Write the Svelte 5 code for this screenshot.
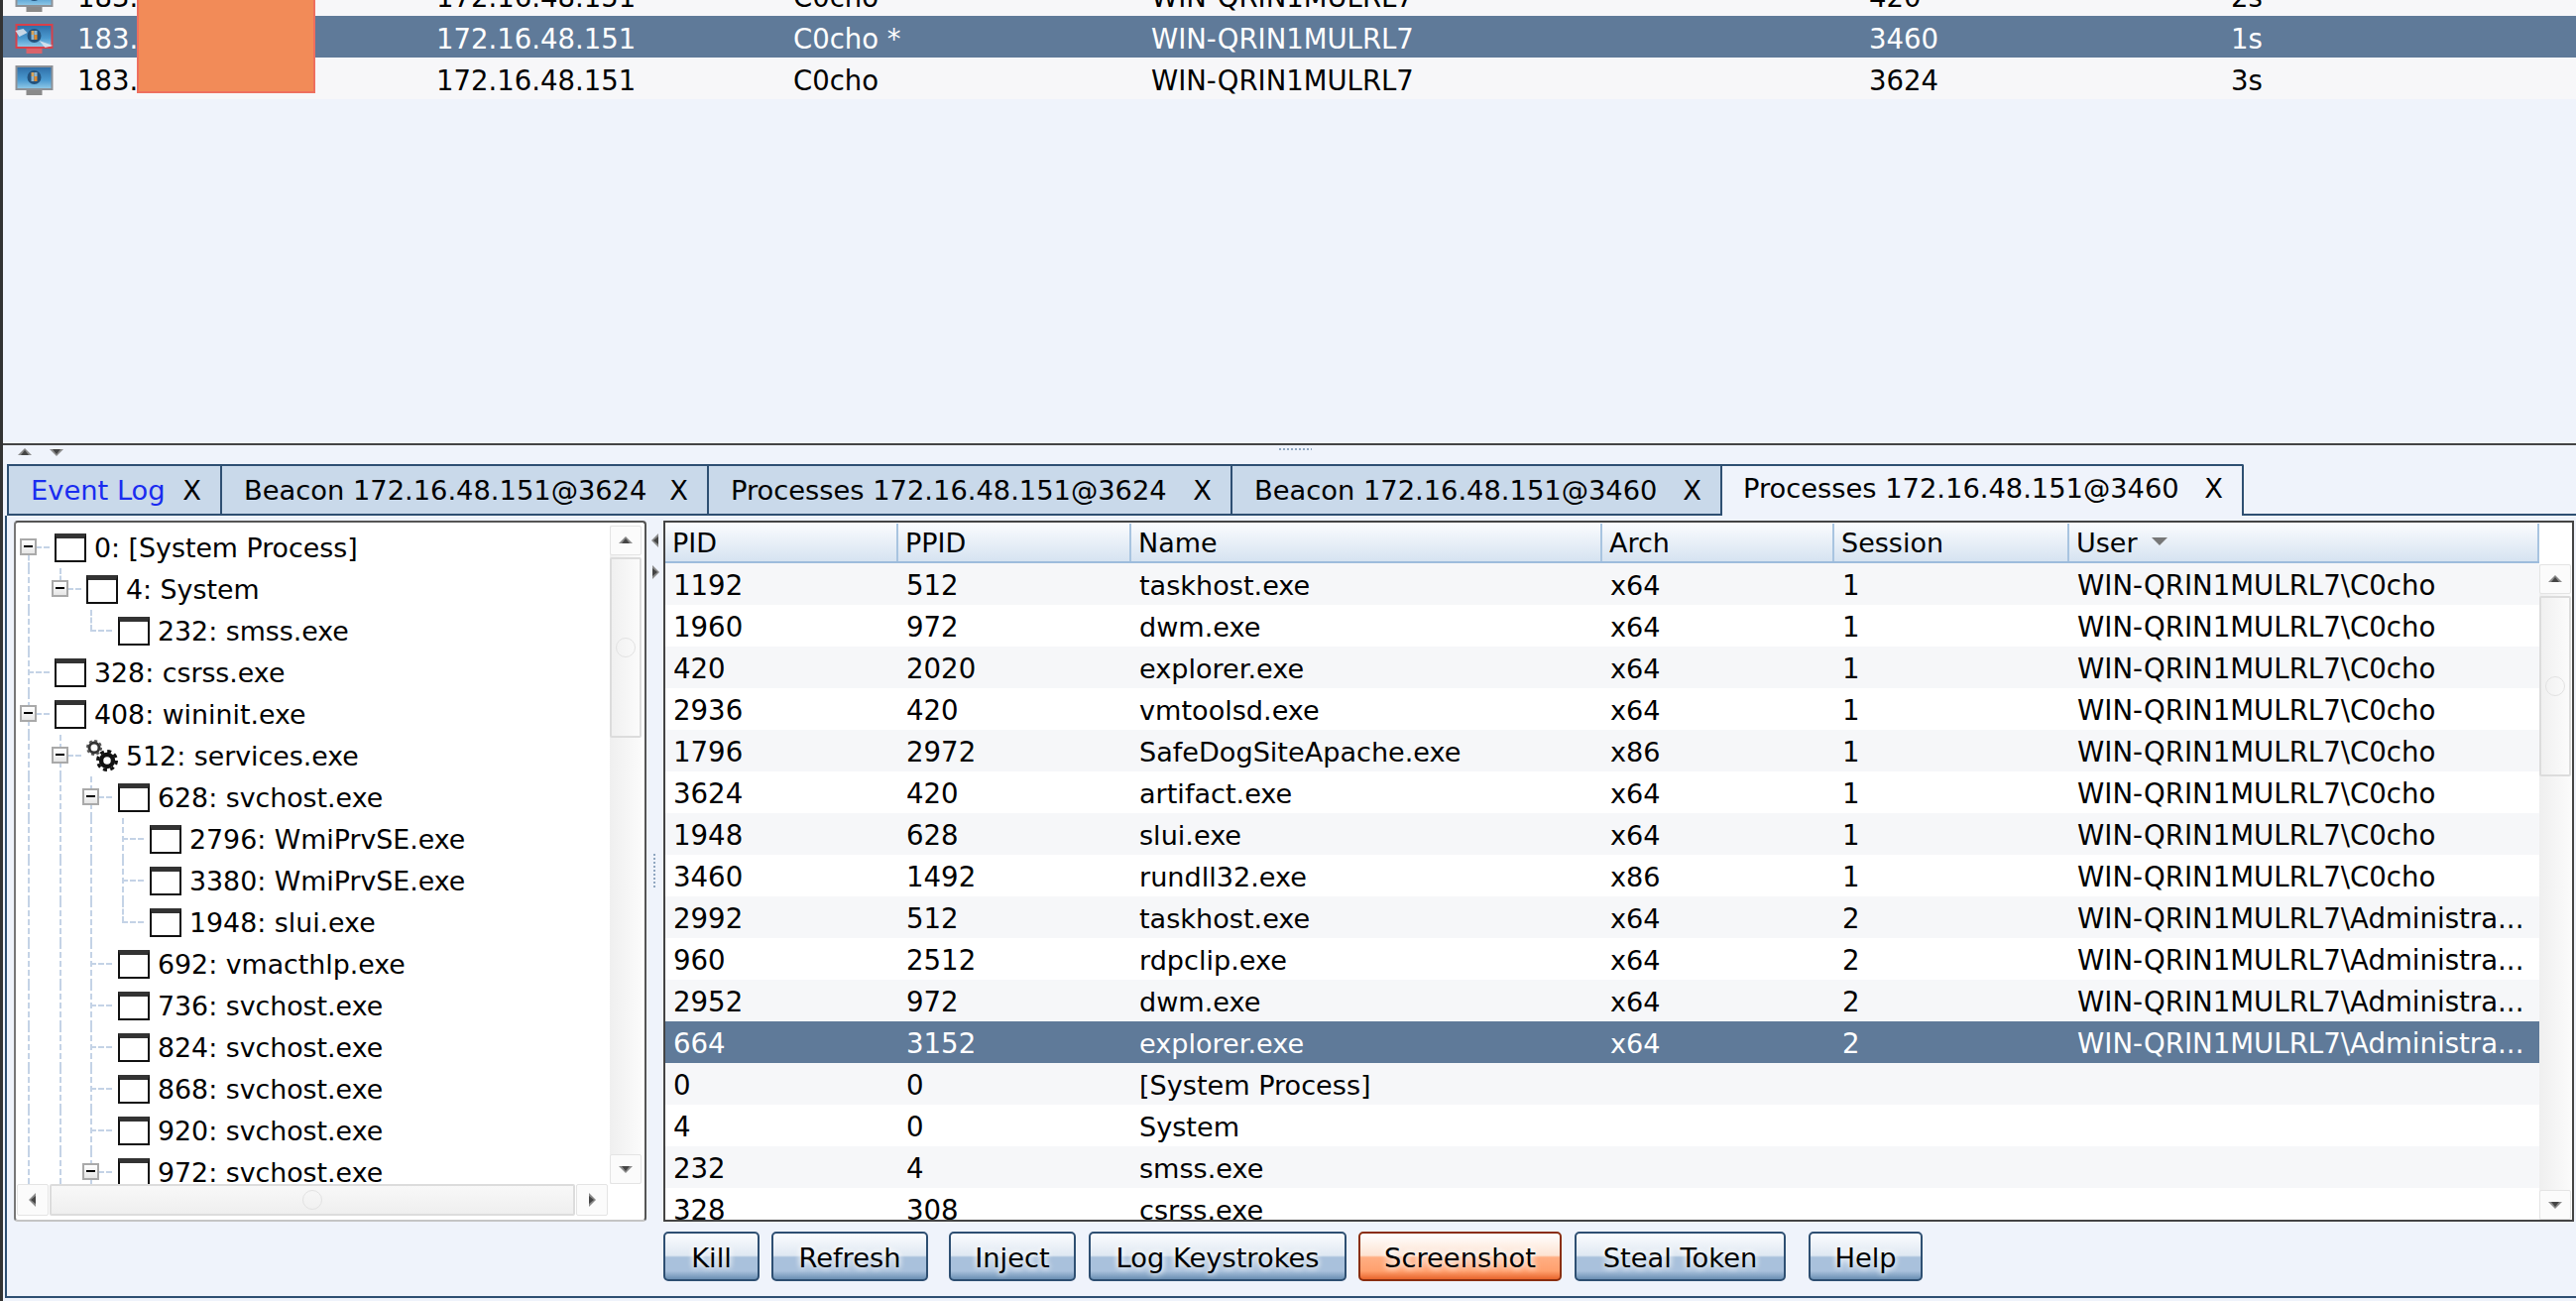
<script lang="ts">
    const host = "WIN-QRIN1MULRL7";

    const sessions = [
        { ext: "183.", note: "C0cho", pid: "420", last: "2s", selected: false },
        { ext: "183.", note: "C0cho *", pid: "3460", last: "1s", selected: true },
        { ext: "183.", note: "C0cho", pid: "3624", last: "3s", selected: false },
    ];

    const tabs = [
        { label: "Event Log", kind: "log" },
        { label: "Beacon 172.16.48.151@3624", kind: "" },
        { label: "Processes 172.16.48.151@3624", kind: "" },
        { label: "Beacon 172.16.48.151@3460", kind: "" },
        { label: "Processes 172.16.48.151@3460", kind: "active" },
    ];

    // depth, label, has expander, uses gear icon
    const treeSource: [number, string, boolean, boolean?][] = [
        [0, "0: [System Process]", true],
        [1, "4: System", true],
        [2, "232: smss.exe", false],
        [0, "328: csrss.exe", false],
        [0, "408: wininit.exe", true],
        [1, "512: services.exe", true, true],
        [2, "628: svchost.exe", true],
        [3, "2796: WmiPrvSE.exe", false],
        [3, "3380: WmiPrvSE.exe", false],
        [3, "1948: slui.exe", false],
        [2, "692: vmacthlp.exe", false],
        [2, "736: svchost.exe", false],
        [2, "824: svchost.exe", false],
        [2, "868: svchost.exe", false],
        [2, "920: svchost.exe", false],
        [2, "972: svchost.exe", true],
    ];

    function hasNextSibling(i: number): boolean {
        const depth = treeSource[i][0];
        for (let j = i + 1; j < treeSource.length; j++) {
            if (treeSource[j][0] === depth) return true;
            if (treeSource[j][0] < depth) return false;
        }
        return true;
    }

    const colX = (d: number) => 12 + 31.5 * d;

    // Work out the dashed connector lines of each row
    const open: boolean[] = [];
    const treeRows = treeSource.map(([depth, label, expander, gear], i) => {
        const next = hasNextSibling(i);
        const full: number[] = [];
        for (let k = 0; k < depth; k++) {
            if (open[k]) full.push(colX(k));
        }
        open[depth] = next;
        return { depth, label, expander, gear, next, full, first: i === 0 };
    });

    const processes = [
        ["1192", "512", "taskhost.exe", "x64", "1", "C0cho"],
        ["1960", "972", "dwm.exe", "x64", "1", "C0cho"],
        ["420", "2020", "explorer.exe", "x64", "1", "C0cho"],
        ["2936", "420", "vmtoolsd.exe", "x64", "1", "C0cho"],
        ["1796", "2972", "SafeDogSiteApache.exe", "x86", "1", "C0cho"],
        ["3624", "420", "artifact.exe", "x64", "1", "C0cho"],
        ["1948", "628", "slui.exe", "x64", "1", "C0cho"],
        ["3460", "1492", "rundll32.exe", "x86", "1", "C0cho"],
        ["2992", "512", "taskhost.exe", "x64", "2", "Administra..."],
        ["960", "2512", "rdpclip.exe", "x64", "2", "Administra..."],
        ["2952", "972", "dwm.exe", "x64", "2", "Administra..."],
        ["664", "3152", "explorer.exe", "x64", "2", "Administra..."],
        ["0", "0", "[System Process]", "", "", ""],
        ["4", "0", "System", "", "", ""],
        ["232", "4", "smss.exe", "", "", ""],
        ["328", "308", "csrss.exe", "", "", ""],
    ];
    const selectedProcess = 11;

    const columns = ["PID", "PPID", "Name", "Arch", "Session", "User"];

    const buttons = [
        { label: "Kill", cls: "kill" },
        { label: "Refresh", cls: "refresh" },
        { label: "Inject", cls: "inject" },
        { label: "Log Keystrokes", cls: "keys" },
        { label: "Screenshot", cls: "shot" },
        { label: "Steal Token", cls: "steal" },
        { label: "Help", cls: "help" },
    ];
</script>

{#snippet arrow(dir: string)}
    <svg class="arrow {dir}" viewBox="0 0 16 10" width="16" height="10">
        <polygon points="8,1 15,8 1,8" fill="#8a8a8a" />
        <polygon points="8,3 12,8 4,8" fill="#444" />
    </svg>
{/snippet}

{#snippet monitor(selected: boolean)}
    <svg class="monitor" viewBox="0 0 38 30" width="39" height="30">
        <defs>
            <linearGradient id="scr{selected ? 1 : 0}" x1="0" y1="0" x2="0" y2="1">
                <stop offset="0" stop-color="#2f6fa8" />
                <stop offset="0.6" stop-color="#4b9ad0" />
                <stop offset="1" stop-color="#8cc6e6" />
            </linearGradient>
        </defs>
        <rect x="11" y="24" width="16" height="6" fill={selected ? "#d9636b" : "#8a8a8a"} />
        <rect x="0" y="0" width="38" height="25" fill={selected ? "#d8404a" : "#8d9197"} />
        <rect x="2" y="2" width="34" height="21" fill="url(#scr{selected ? 1 : 0})" />
        <circle cx="19" cy="12" r="7" fill="#24527c" />
        <rect x="16" y="7" width="3" height="4" fill="#d9a55a" />
        <rect x="19" y="7" width="3" height="4" fill="#8fb6cf" />
        <rect x="16" y="11" width="3" height="5" fill="#8fb6cf" />
        <rect x="19" y="11" width="3" height="5" fill="#e08a2c" />
        {#if selected}
            <path d="M0 7 L8 5 L12 9 L4 13 Z M24 17 L38 22 L30 24 Z" fill="#dfe6ee" opacity="0.85" />
        {/if}
    </svg>
{/snippet}

{#snippet gearIcon()}
    <svg class="gear" viewBox="0 0 32 32" width="32" height="32">
        <circle cx="8" cy="8" r="5" fill="none" stroke="#333" stroke-width="3" />
        <circle cx="8" cy="8" r="7" fill="none" stroke="#555" stroke-width="2" stroke-dasharray="3 2.5" />
        <circle cx="21" cy="21" r="6" fill="none" stroke="#111" stroke-width="4.5" />
        <circle cx="21" cy="21" r="9.5" fill="none" stroke="#111" stroke-width="3" stroke-dasharray="4 3.45" />
    </svg>
{/snippet}

<div class="app">
    <section class="sessions">
        {#each sessions as s}
            <div class="session-row" class:selected={s.selected}>
                <span class="session-icon">{@render monitor(s.selected)}</span>
                <span>{s.ext}</span>
                <span>172.16.48.151</span>
                <span>{s.note}</span>
                <span>{host}</span>
                <span>{s.pid}</span>
                <span>{s.last}</span>
            </div>
        {/each}
        <div class="redaction"></div>
    </section>

    <div class="splitter">
        <div class="split-arrows">
            {@render arrow("up")}
            {@render arrow("down")}
        </div>
        <div class="grip"></div>
    </div>

    <nav class="tabs">
        {#each tabs as tab}
            <div class="tab {tab.kind}">
                <span class="tab-label">{tab.label}</span>
                <span class="tab-close">X</span>
            </div>
        {/each}
        <div class="tab-rest"></div>
    </nav>

    <div class="pane">
        <div class="split">
            <div class="tree-panel">
                <div class="tree-top">
                    <div class="tree">
                        {#each treeRows as row}
                            <div class="tree-row" style="padding-left: {39 + 32 * row.depth}px">
                                {#each row.full as x}
                                    <i class="line full" style="left: {x}px"></i>
                                {/each}
                                {#if row.first}
                                    <i class="line lower" style="left: {colX(0)}px"></i>
                                {:else}
                                    <i class="line {row.next ? 'full' : 'upper'}" style="left: {colX(row.depth)}px"></i>
                                {/if}
                                <i class="stub" style="left: {colX(row.depth)}px"></i>
                                {#if row.expander}
                                    <i class="expander" style="left: {colX(row.depth) - 8}px"></i>
                                {/if}
                                {#if row.gear}
                                    {@render gearIcon()}
                                {:else}
                                    <span class="win"></span>
                                {/if}
                                <span class="tree-label">{row.label}</span>
                            </div>
                        {/each}
                    </div>
                    <div class="vscroll tree-v">
                        <div class="scroll-btn">{@render arrow("up")}</div>
                        <div class="thumb"><span class="knob"></span></div>
                        <div class="track"></div>
                        <div class="scroll-btn">{@render arrow("down")}</div>
                    </div>
                </div>
                <div class="hscroll">
                    <div class="scroll-btn h">{@render arrow("left")}</div>
                    <div class="hthumb"><span class="knob"></span></div>
                    <div class="scroll-btn h">{@render arrow("right")}</div>
                </div>
            </div>

            <div class="divider">
                {@render arrow("left")}
                {@render arrow("right")}
                <div class="divider-grip"></div>
            </div>

            <div class="table">
                <div class="table-main">
                    <div class="thead cols">
                        {#each columns as c}
                            <div class="th">
                                {c}
                                {#if c === "User"}
                                    <svg class="sort" viewBox="0 0 16 10" width="16" height="10">
                                        <polygon points="0,1 16,1 8,9" fill="#777" />
                                    </svg>
                                {/if}
                            </div>
                        {/each}
                    </div>
                    <div class="tbody">
                        {#each processes as p, i}
                            <div class="tr cols" class:selected={i === selectedProcess}>
                                <span>{p[0]}</span>
                                <span>{p[1]}</span>
                                <span class="name">{p[2]}</span>
                                <span class="name">{p[3]}</span>
                                <span>{p[4]}</span>
                                <span>{p[5] ? `${host}\\${p[5]}` : ""}</span>
                            </div>
                        {/each}
                    </div>
                </div>
                <div class="vscroll table-v">
                    <div class="scroll-btn">{@render arrow("up")}</div>
                    <div class="thumb"><span class="knob"></span></div>
                    <div class="track"></div>
                    <div class="scroll-btn">{@render arrow("down")}</div>
                </div>
            </div>
        </div>

        <div class="actions">
            {#each buttons as b}
                <button class="btn {b.cls}">{b.label}</button>
            {/each}
        </div>
    </div>
</div>

<style>
    :global(body) {
        margin: 0;
        background: #eff3fb;
    }

    .app {
        width: 2598px;
        height: 1312px;
        display: flex;
        flex-direction: column;
        overflow: hidden;
        background: #eff3fb;
        border-left: 3px solid #333;
        box-sizing: border-box;
        font-family: "DejaVu Sans", sans-serif;
        font-size: 27px;
        color: #000;
    }

    /* Top session table */
    .sessions {
        position: relative;
        flex-shrink: 0;
        box-sizing: border-box;
        margin-top: -26px;
        height: 475px;
        border-bottom: 2px solid #444;
        font-size: 27.5px;
    }

    .session-row {
        display: grid;
        grid-template-columns: 75px 362px 360px 361px 724px 365px 1fr;
        align-items: center;
        height: 42px;
        box-sizing: border-box;
        padding-top: 3px;
        background: #f7f7f9;
    }

    .session-row.selected {
        background: #5f7a99;
        color: #fff;
    }

    .session-icon {
        display: flex;
        padding-left: 12px;
    }

    .redaction {
        position: absolute;
        left: 135px;
        top: 0;
        width: 180px;
        height: 120px;
        box-sizing: border-box;
        background: #f28b58;
        border: 2px solid #ee6f5e;
        border-top: none;
    }

    .splitter {
        position: relative;
        height: 19px;
        flex-shrink: 0;
    }

    .split-arrows {
        position: absolute;
        left: 14px;
        top: 2px;
        display: flex;
        gap: 16px;
    }

    .grip {
        position: absolute;
        left: 1286px;
        top: 2px;
        width: 34px;
        height: 5px;
        background-image: radial-gradient(#8fa6c0 1px, transparent 1.4px);
        background-size: 4px 4px;
    }

    .arrow {
        display: block;
    }

    .arrow.down {
        transform: rotate(180deg);
    }

    .arrow.left {
        transform: rotate(-90deg);
    }

    .arrow.right {
        transform: rotate(90deg);
    }

    /* Tabs */
    .tabs {
        display: flex;
        height: 52px;
        flex-shrink: 0;
        padding-left: 4px;
        box-sizing: border-box;
        font-size: 27.3px;
    }

    .tab {
        display: flex;
        align-items: center;
        justify-content: space-between;
        flex-shrink: 0;
        box-sizing: border-box;
        padding: 1px 19px 0 22px;
        background: #c9d9ea;
        border-top: 2px solid #2e4f72;
        border-right: 2px solid #2e4f72;
        border-bottom: 2px solid #2e4f72;
    }

    .tab:nth-child(1) {
        width: 217px;
        border-left: 2px solid #2e4f72;
    }

    .tab:nth-child(2) {
        width: 491px;
    }

    .tab:nth-child(3) {
        width: 528px;
    }

    .tab:nth-child(4) {
        width: 494px;
    }

    .tab:nth-child(5) {
        width: 526px;
    }

    .tab.log .tab-label {
        color: #1a2cf0;
    }

    .tab.active {
        background: #eff3fb;
        border-bottom: none;
        padding-top: 0;
        padding-bottom: 6px;
        padding-left: 21px;
        border-radius: 0 2px 0 0;
    }

    .tab-rest {
        flex: 1;
        border-bottom: 2px solid #2e4f72;
    }

    /* Tab body */
    .pane {
        flex: 1;
        margin-bottom: 3px;
        margin-left: 2px;
        border-left: 2px solid #2e4f72;
        border-bottom: 2px solid #2e4f72;
        padding-top: 5px;
        box-sizing: border-box;
        display: flex;
        flex-direction: column;
    }

    .split {
        display: flex;
        height: 707px;
        padding-left: 7px;
    }

    .tree-panel {
        width: 638px;
        flex-shrink: 0;
        display: flex;
        flex-direction: column;
        box-sizing: border-box;
        background: #fff;
        border: 2px solid #777;
        border-top-color: #555;
        border-right-color: #555;
        border-bottom-color: #c4c4c4;
        border-radius: 4px;
        font-size: 26.8px;
    }

    .tree-top {
        display: flex;
        height: 667px;
    }

    .tree {
        flex: 1;
        overflow: hidden;
        padding-top: 4px;
    }

    .tree-row {
        position: relative;
        display: flex;
        align-items: center;
        gap: 8px;
        height: 42px;
        white-space: nowrap;
    }

    .line {
        position: absolute;
        width: 0;
        border-left: 2px dashed #c4d3e6;
    }

    .line.full {
        top: 0;
        bottom: 0;
    }

    .line.upper {
        top: 0;
        height: 21px;
    }

    .line.lower {
        top: 21px;
        bottom: 0;
    }

    .stub {
        position: absolute;
        top: 20px;
        width: 22px;
        border-top: 2px dashed #c4d3e6;
    }

    .expander {
        position: absolute;
        top: 12px;
        width: 17px;
        height: 17px;
        box-sizing: border-box;
        background: linear-gradient(#fff, #e6e6e6);
        border: 2px solid #a9a9a9;
    }

    .expander::after {
        content: "";
        position: absolute;
        left: 2px;
        right: 2px;
        top: 5px;
        height: 2px;
        background: #000;
    }

    .win {
        position: relative;
        width: 32px;
        height: 29px;
        flex-shrink: 0;
        box-sizing: border-box;
        background: #fff;
        border: 2px solid #111;
        border-top-width: 5px;
        border-top-color: #333;
    }

    .gear {
        flex-shrink: 0;
    }

    .tree-label {
        position: relative;
        background: #fff;
    }

    /* Scrollbars */
    .vscroll {
        flex-shrink: 0;
        width: 32px;
        display: flex;
        flex-direction: column;
        box-sizing: border-box;
        background: linear-gradient(90deg, #efefef, #fbfbfb);
    }

    .tree-v {
        margin: 3px 3px 0 0;
    }

    .table-v {
        padding-top: 42px;
        background: linear-gradient(#fff 42px, transparent 42px), linear-gradient(90deg, #efefef, #fbfbfb);
    }

    .scroll-btn {
        flex-shrink: 0;
        height: 30px;
        display: flex;
        align-items: center;
        justify-content: center;
        box-sizing: border-box;
        background: #fbfbfb;
        border: 1px solid #e4e4e4;
        border-radius: 2px;
    }

    .scroll-btn.h {
        width: 32px;
        height: 32px;
    }

    .thumb {
        flex-shrink: 0;
        height: 182px;
        margin-top: 2px;
        display: flex;
        align-items: center;
        justify-content: center;
        box-sizing: border-box;
        background: linear-gradient(90deg, #f0f0f0, #fbfbfb);
        border: 2px solid #dcdcdc;
        border-radius: 2px;
    }

    .track {
        flex: 1;
    }

    .knob {
        width: 20px;
        height: 20px;
        box-sizing: border-box;
        border: 1px solid #e2e2e2;
        border-radius: 50%;
    }

    .hscroll {
        display: flex;
        height: 32px;
        padding-left: 1px;
        gap: 1px;
    }

    .hthumb {
        width: 530px;
        display: flex;
        align-items: center;
        justify-content: center;
        box-sizing: border-box;
        background: linear-gradient(#f8f8f8, #efefef);
        border: 2px solid #dcdcdc;
        border-radius: 2px;
    }

    /* Divider between tree and table */
    .divider {
        position: relative;
        width: 17px;
        flex-shrink: 0;
        padding-top: 15px;
        display: flex;
        flex-direction: column;
        align-items: center;
        gap: 22px;
    }

    .divider-grip {
        position: absolute;
        left: 6px;
        top: 335px;
        width: 5px;
        height: 36px;
        background-image: radial-gradient(#8fa6c0 1px, transparent 1.4px);
        background-size: 4px 4px;
    }

    /* Process table */
    .table {
        flex: 1;
        display: flex;
        box-sizing: border-box;
        margin-right: 2px;
        background: #fff;
        border: 2px solid #444;
        font-size: 27.6px;
    }

    .table-main {
        width: 1890px;
        flex-shrink: 0;
        display: flex;
        flex-direction: column;
    }

    .cols {
        display: grid;
        grid-template-columns: 235px 235px 475px 234px 237px 474px;
    }

    .thead {
        height: 41px;
        flex-shrink: 0;
        box-sizing: border-box;
        padding-top: 1px;
        background: linear-gradient(#fbfcfe, #d6e3f1);
        border-bottom: 2px solid #9dbcdc;
        font-size: 27px;
    }

    .th {
        display: flex;
        align-items: center;
        gap: 14px;
        padding-left: 7px;
        border-right: 2px solid #a8c4e0;
    }

    .sort {
        margin-top: -2px;
    }

    .tbody {
        flex: 1;
        overflow: hidden;
    }

    .tr {
        height: 42px;
        align-items: center;
        box-sizing: border-box;
        padding-top: 3px;
    }

    .tr:nth-child(odd) {
        background: #f6f7f9;
    }

    .tr.selected {
        background: #5f7a99;
        color: #fff;
    }

    .tr span {
        padding-left: 8px;
        white-space: nowrap;
    }

    .tr span.name {
        font-size: 27.1px;
    }

    /* Bottom buttons */
    .actions {
        display: flex;
        height: 50px;
        margin-top: 10px;
        padding-left: 662px;
    }

    .btn {
        height: 50px;
        padding: 2px 0 0;
        font: inherit;
        font-size: 27.3px;
        color: #000;
        box-sizing: border-box;
        border: 2px solid #2e4f72;
        border-radius: 5px;
        background: linear-gradient(#fbfcfe 0, #dfe8f2 48%, #a9c1dc 52%, #a9c1dc 82%, #6a8fb3 100%);
        text-shadow: 0 0 6px #fff, 0 0 6px #fff;
    }

    .kill {
        width: 97px;
    }

    .refresh {
        width: 158px;
        margin-left: 12px;
    }

    .inject {
        width: 128px;
        margin-left: 21px;
    }

    .keys {
        width: 260px;
        margin-left: 13px;
    }

    .shot {
        width: 205px;
        margin-left: 12px;
        border-color: #8a2e10;
        background: linear-gradient(#fff 0, #fde3d2 48%, #ffae82 52%, #ffa06e 82%, #e8652c 100%);
    }

    .steal {
        width: 213px;
        margin-left: 13px;
    }

    .help {
        width: 115px;
        margin-left: 23px;
    }
</style>
